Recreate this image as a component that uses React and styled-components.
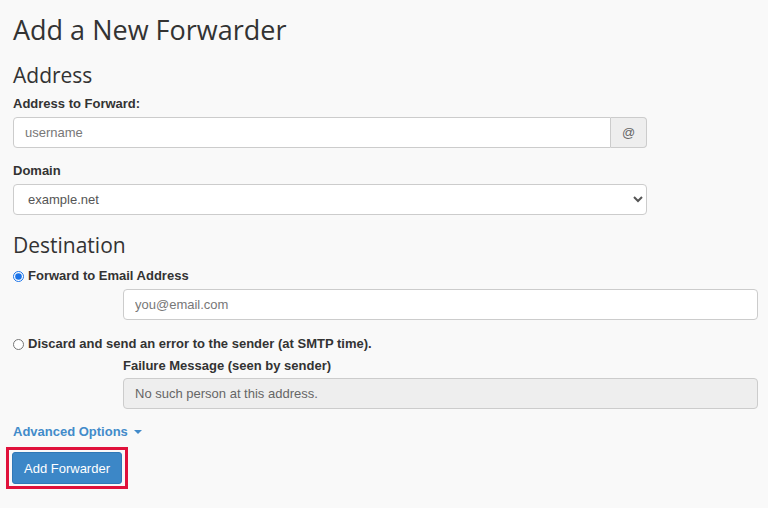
import styled, { createGlobalStyle } from "styled-components";

const GlobalStyle = createGlobalStyle`
  html, body {
    margin: 0;
    background: #f9f9f9;
  }
  body {
    font-family: "Liberation Sans", Arial, sans-serif;
    color: #333;
  }
`;

const Page = styled.div`
  width: 768px;
  height: 508px;
  box-sizing: border-box;
  padding: 12px 10px 0 13px;
  overflow: hidden;
`;

const Title = styled.h1`
  font-family: "Open Sans", sans-serif;
  font-weight: 400;
  font-size: 27px;
  line-height: 36px;
  margin: 0 0 12px;
  color: #333;
`;

const Section = styled.h2`
  font-family: "Open Sans", sans-serif;
  font-weight: 400;
  font-size: 21px;
  line-height: 30px;
  margin: 0 0 5px;
  color: #333;
`;

const Label = styled.label`
  display: block;
  font-weight: 700;
  font-size: 13px;
  line-height: 18px;
  margin-bottom: ${(p) => p.$gap ?? 4}px;
  color: #333;
`;

const Group = styled.div`
  width: ${(p) => (p.$indent ? "auto" : "634px")};
  margin-left: ${(p) => (p.$indent ? "110px" : "0")};
  margin-bottom: ${(p) => p.$gap ?? 14}px;
`;

const InputGroup = styled.div`
  display: flex;
`;

const Input = styled.input`
  flex: 1;
  width: 100%;
  box-sizing: border-box;
  height: 31px;
  padding: 0 11px;
  font-family: "Liberation Sans", Arial, sans-serif;
  font-size: 13px;
  color: #555;
  background: ${(p) => (p.disabled ? "#eeeeee" : "#fff")};
  border: 1px solid #ccc;
  border-radius: ${(p) => (p.$joined ? "4px 0 0 4px" : "4px")};
  outline: none;

  &::placeholder {
    color: #777;
  }
  &:disabled {
    color: #666;
  }
`;

const Addon = styled.span`
  width: 36px;
  box-sizing: border-box;
  display: flex;
  align-items: center;
  justify-content: center;
  background: #eee;
  border: 1px solid #ccc;
  border-left: none;
  border-radius: 0 4px 4px 0;
  font-size: 13px;
  color: #666;
`;

const Select = styled.select`
  width: 100%;
  box-sizing: border-box;
  height: 31px;
  padding: 0 8px 0 10px;
  font-family: "Liberation Sans", Arial, sans-serif;
  font-size: 13px;
  color: #555;
  background: #fff;
  border: 1px solid #ccc;
  border-radius: 4px;
  outline: none;
`;

const RadioRow = styled.label`
  display: flex;
  align-items: center;
  gap: 4px;
  font-weight: 700;
  font-size: 13px;
  line-height: 18px;
  margin: ${(p) => p.$top || 0}px 0 4px;
  color: #333;

  input {
    margin: 0;
    width: 11px;
    height: 11px;
    accent-color: #1a73e8;
  }
`;

const LinkButton = styled.a`
  display: flex;
  width: fit-content;
  align-items: center;
  gap: 6px;
  font-weight: 700;
  font-size: 13px;
  line-height: 18px;
  color: #428bca;
  text-decoration: none;
  margin-top: 14px;
`;

const Caret = styled.span`
  width: 0;
  height: 0;
  border-left: 4px solid transparent;
  border-right: 4px solid transparent;
  border-top: 4px solid #428bca;
`;

const Highlight = styled.div`
  width: fit-content;
  margin: 6px 0 0 -7px;
  padding: 2px 3px;
  border: 3px solid #e0113b;
`;

const Primary = styled.button`
  display: block;
  height: 32px;
  padding: 0 11px;
  font-family: "Liberation Sans", Arial, sans-serif;
  font-size: 13px;
  color: #fff;
  background: #3c87c7;
  border: 1px solid #2f78b7;
  border-radius: 3px;
`;

export default function App() {
  return (
    <>
      <GlobalStyle />
      <Page>
        <Title>Add a New Forwarder</Title>
        <Section>Address</Section>
        <Group>
          <Label>Address to Forward:</Label>
          <InputGroup>
            <Input $joined placeholder="username" />
            <Addon>@</Addon>
          </InputGroup>
        </Group>
        <Group $gap={15}>
          <Label>Domain</Label>
          <Select defaultValue="example.net">
            <option>example.net</option>
          </Select>
        </Group>
        <Section>Destination</Section>
        <RadioRow $top={7}>
          <input type="radio" name="dest" defaultChecked />
          Forward to Email Address
        </RadioRow>
        <Group $indent $gap={15}>
          <Input placeholder="you@email.com" />
        </Group>
        <RadioRow>
          <input type="radio" name="dest" />
          Discard and send an error to the sender (at SMTP time).
        </RadioRow>
        <Group $indent $gap={0}>
          <Label $gap={3}>Failure Message (seen by sender)</Label>
          <Input disabled value="No such person at this address." readOnly />
        </Group>
        <LinkButton href="#">
          Advanced Options <Caret />
        </LinkButton>
        <Highlight>
          <Primary>Add Forwarder</Primary>
        </Highlight>
      </Page>
    </>
  );
}
